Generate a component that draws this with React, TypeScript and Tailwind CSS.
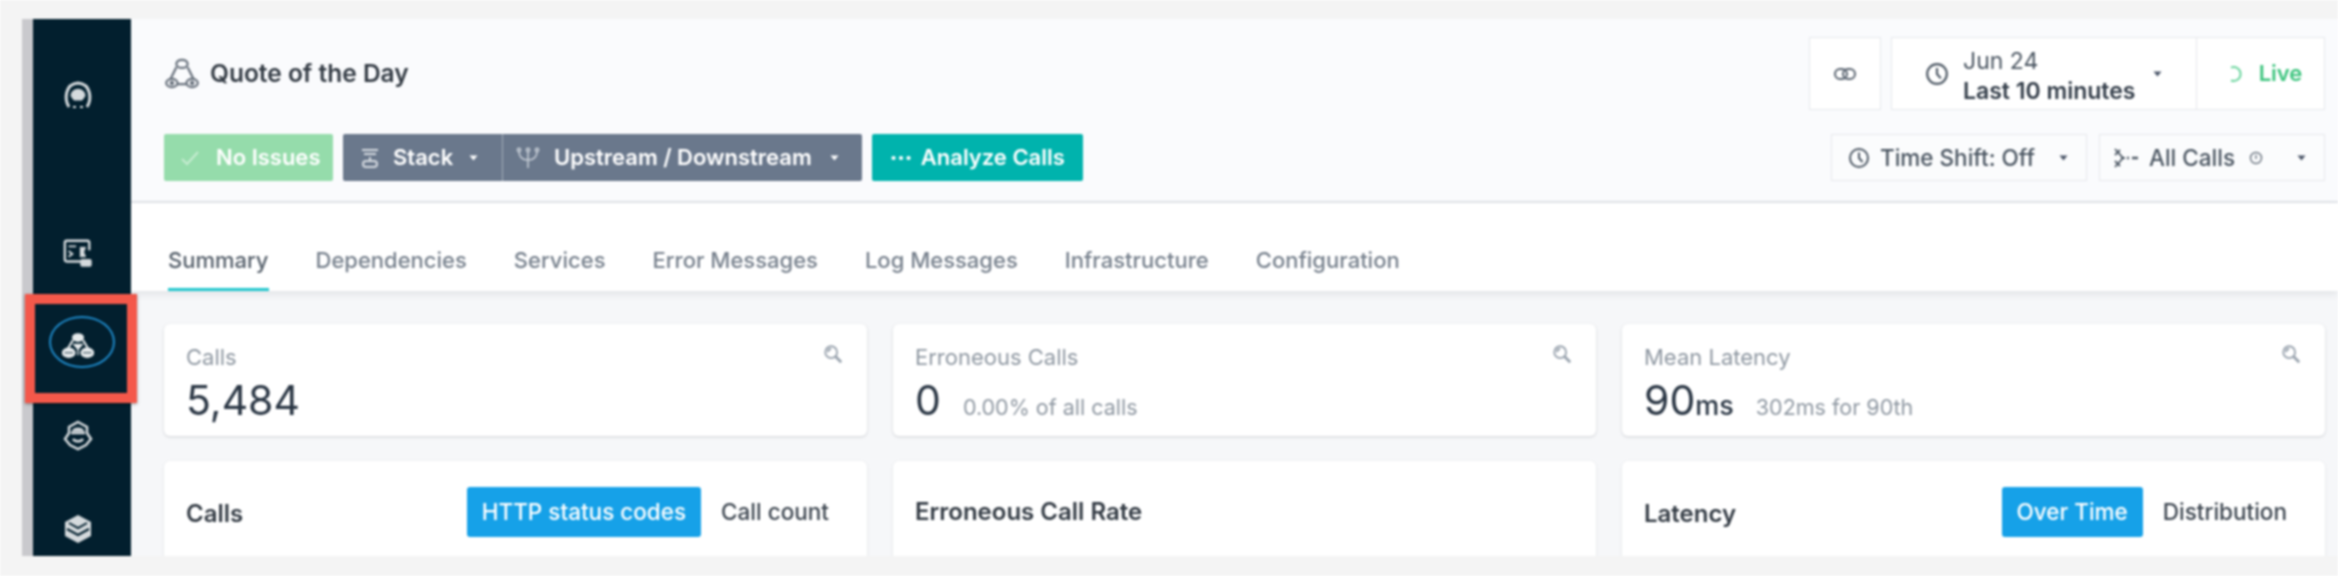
import React from 'react';

const Caret = ({ className = 'text-[#4a5568]' }: { className?: string }) => (
  <svg width="9" height="6" viewBox="0 0 9 6" className={className}>
    <path d="M0.5 0.5h8L4.5 5.5z" fill="currentColor" />
  </svg>
);

// three services joined in a triangle, used in the page title
const ClusterIcon = ({ size = 32, className = '' }: { size?: number; className?: string }) => (
  <svg width={size} height={size} viewBox="0 0 32 32" fill="none" stroke="currentColor" strokeWidth="2" className={className}>
    <ellipse cx="16" cy="7" rx="5" ry="3.6" />
    <ellipse cx="7" cy="24" rx="5" ry="3.6" />
    <ellipse cx="25" cy="24" rx="5" ry="3.6" />
    <path d="M11 10 6 20M21 10l5 10M12 25h8" />
    <circle cx="7" cy="24" r="1" fill="currentColor" />
    <circle cx="25" cy="24" r="1" fill="currentColor" />
  </svg>
);

const ActiveClusterIcon = () => (
  <svg width="38" height="32" viewBox="0 0 38 32" fill="none" stroke="#e6eaec" strokeWidth="2.4">
    <path d="M13 9 7 19M25 9l6 10" />
    <ellipse cx="19" cy="6" rx="6" ry="4" fill="#e6eaec" />
    <ellipse cx="8" cy="24" rx="7" ry="5" fill="#e6eaec" />
    <ellipse cx="30" cy="24" rx="7" ry="5" fill="#e6eaec" />
    <path d="M14 14h10l-5 6zM19 20v7" fill="#e6eaec" strokeWidth="1.6" />
    <path d="M3 24h10M25 24h10" stroke="#021f2e" strokeWidth="1" />
  </svg>
);

const ZoomIcon = () => (
  <svg width="20" height="20" viewBox="0 0 22 22" fill="none" stroke="#98a2ad" strokeWidth="2">
    <circle cx="9" cy="9" r="6.5" />
    <path d="M13.5 13.5 20 20" strokeWidth="3" />
    <path d="M5.5 9a3.5 3.5 0 0 1 3.5-3.5" />
  </svg>
);

const ClockIcon = ({ size = 22 }: { size?: number }) => (
  <svg width={size} height={size} viewBox="0 0 22 22" fill="none" stroke="#4f5a66" strokeWidth="2">
    <circle cx="11" cy="11" r="9" />
    <path d="M11 5.5V11l3.5 4" />
  </svg>
);

const SideIcon = ({ children, className }: { children: React.ReactNode; className: string }) => (
  <div className={`h-8 w-8 flex items-center justify-center text-[#d5dadd] ${className}`}>{children}</div>
);

const StatCard = ({ label, value, unit, note }: { label: string; value: string; unit?: string; note?: string }) => (
  <div className="relative h-[112px] bg-white rounded-md shadow-[0_1px_3px_rgba(40,50,60,0.18)] px-[22px] pt-[20px]">
    <div className="text-[22px] leading-[26px] text-[#8f98a2]">{label}</div>
    <div className="flex items-baseline mt-[5px] text-[#2a3644]">
      <span className="text-[41px] leading-[50px]">{value}</span>
      {unit && <span className="text-[27px] font-medium">{unit}</span>}
      {note && <span className="text-[21.5px] text-[#8f98a2] ml-[22px]">{note}</span>}
    </div>
    <div className="absolute right-[24px] top-[20px]"><ZoomIcon /></div>
  </div>
);

const ChartCard = ({ title, active, other }: { title: string; active?: string; other?: string }) => (
  <div className="h-[130px] bg-white rounded-md shadow-[0_1px_3px_rgba(40,50,60,0.12)] px-[22px] pt-[26px]">
    <div className="flex items-center justify-between h-[50px]">
      <span className={`text-[24px] font-semibold text-[#333b44] ${active ? 'mt-1' : ''}`}>{title}</span>
      {active && (
        <div className="flex items-center">
          <span className="h-[50px] px-[15px] flex items-center rounded-[3px] bg-[#16a1e8] text-white text-[22.5px] font-medium">{active}</span>
          <span className="pl-[20px] pr-[16px] text-[22.5px] font-medium text-[#3d4650]">{other}</span>
        </div>
      )}
    </div>
  </div>
);

const tabs = ['Summary', 'Dependencies', 'Services', 'Error Messages', 'Log Messages', 'Infrastructure', 'Configuration'];

export default function App() {
  return (
    <div className="h-[576px] w-[2338px] overflow-hidden bg-[#f4f4f4] pl-[22px] pt-[19px] blur-[1px] font-['Inter','Noto_Sans',sans-serif]">
      <div className="flex h-[537px]">
        <div className="w-[11px] bg-[#c9c9cd]"></div>

        {/* Sidebar */}
        <aside className="relative w-[98px] bg-[#021f2e] flex flex-col items-center pr-2 pt-[60px]">
          <SideIcon className="">
            <svg width="34" height="34" viewBox="0 0 32 32" fill="none" stroke="currentColor" strokeWidth="3">
              <path d="M7 28C2 20 3 5 16 4c13 1 14 16 9 24" />
              <path d="M9 17c0-9 14-9 14 0l-3 4h-8z" fill="currentColor" strokeWidth="1" />
              <path d="M11 28h3M18 28h3" strokeWidth="2" />
            </svg>
          </SideIcon>
          <SideIcon className="mt-[126px]">
            <svg width="36" height="36" viewBox="0 0 34 34" fill="none" stroke="currentColor" strokeWidth="2.5">
              <path d="M24 26H5a2 2 0 0 1-2-2V6a2 2 0 0 1 2-2h22a2 2 0 0 1 2 2v8" />
              <path d="M7 10h8M7 15l4 3-4 3" strokeWidth="2" />
              <path d="M19 11h6l-2 5 2 5h-6" fill="currentColor" strokeWidth="1" />
              <rect x="20" y="24" width="11" height="7" rx="1" fill="currentColor" strokeWidth="1" />
            </svg>
          </SideIcon>
          <SideIcon className="mt-[61px]"><ActiveClusterIcon /></SideIcon>
          <SideIcon className="mt-[57px]">
            <svg width="32" height="32" viewBox="0 0 32 32" fill="none" stroke="currentColor" strokeWidth="2.5">
              <path d="M16 3 25 8v6l4 6-5 6-8 4-8-4-5-6 4-6V8z" />
              <path d="M9 14h14M11 20c2 3 8 3 10 0" />
              <path d="M10 12c2-4 10-4 12 0z" fill="currentColor" strokeWidth="1" />
            </svg>
          </SideIcon>
          <SideIcon className="mt-[62px]">
            <svg width="32" height="32" viewBox="0 0 32 32" fill="currentColor">
              <path d="M16 2 29 9v14l-13 7-13-7V9z" />
              <path d="M7 10l9 5 9-5M5 16l11 6 11-6" fill="none" stroke="#021f2e" strokeWidth="2" />
            </svg>
          </SideIcon>

          {/* Annotation box */}
          <div className="absolute left-[-8px] top-[275px] w-[112px] h-[109px] border-[10px] border-[#f4584a] shadow-[0_1px_3px_rgba(0,0,0,0.4)]">
            <div className="absolute left-[14px] top-[12px] w-[66px] h-[52px] rounded-[50%] border-[2px] border-[#1e88c7]"></div>
          </div>
        </aside>

        {/* Main */}
        <main className="flex-1 min-w-0 flex flex-col overflow-hidden bg-[#f6f7f9]">
          <header className="relative h-[184px] shrink-0 bg-[#fafbfd] border-b-2 border-[#e3e6ea] pl-[33px] pr-[13px]">
            <div className="flex justify-between pt-[18px] h-[114px]">
              <div className="flex items-center gap-[10px] h-[73px] text-[#333b44]">
                <ClusterIcon size={36} className="text-[#69727d]" />
                <span className="text-[24.5px] font-semibold">Quote of the Day</span>
              </div>
              <div className="flex gap-[10px]">
                <button className="w-[72px] h-[73px] bg-white border border-[#e6e8ec] flex items-center justify-center">
                  <svg width="22" height="12" viewBox="0 0 22 12" fill="none" stroke="#5a6470" strokeWidth="2">
                    <rect x="1" y="1" width="12" height="10" rx="5" />
                    <rect x="9" y="1" width="12" height="10" rx="5" />
                  </svg>
                </button>
                <div className="flex h-[73px] bg-white border border-[#e6e8ec]">
                  <div className="w-[305px] flex items-center pl-[33px] pr-[34px] border-r border-[#e6e8ec]">
                    <ClockIcon size={24} />
                    <div className="ml-[14px] pt-[4px] text-[23px] leading-[30px] text-[#4a5561] whitespace-nowrap">
                      <div>Jun 24</div>
                      <div className="font-semibold text-[#333d49]">Last 10 minutes</div>
                    </div>
                    <div className="ml-auto"><Caret /></div>
                  </div>
                  <div className="w-[127px] flex items-center justify-center gap-[14px] pl-[10px] text-[22px] font-semibold text-[#3dc47e]">
                    <svg width="16" height="18" viewBox="0 0 16 18" fill="none" stroke="#6ed6a0" strokeWidth="2">
                      <path d="M2 2.5a7 7 0 1 1 0 13" />
                    </svg>
                    Live
                  </div>
                </div>
              </div>
            </div>

            <div className="flex justify-between mt-[1px]">
              <div className="flex h-[47px] gap-[10px] text-white text-[22px] font-semibold whitespace-nowrap">
                <div className="w-[169px] flex items-center pl-4 gap-[16px] rounded-[2px] bg-[#95dcab]">
                  <svg width="20" height="16" viewBox="0 0 20 16" fill="none" stroke="#c6ecd1" strokeWidth="2"><path d="m2 9 5 5L18 2" /></svg>
                  No Issues
                </div>
                <div className="flex rounded-[2px] bg-[#6a788c]">
                  <div className="w-[160px] flex items-center pl-4 gap-3 border-r border-[#a2adba]">
                    <svg width="22" height="22" viewBox="0 0 22 22" fill="none" stroke="#d5dae0" strokeWidth="2"><path d="M3 3h16M5 7h12M11 10v4" /><rect x="4" y="14" width="14" height="6" rx="3" /></svg>
                    Stack
                    <span className="ml-1"><Caret className="text-white" /></span>
                  </div>
                  <div className="w-[359px] flex items-center pl-[13px] gap-[14px]">
                    <svg width="24" height="24" viewBox="0 0 24 24" fill="none" stroke="#c5ccd5" strokeWidth="1.6"><path d="M12 6v16M3 5c0 7 4 9 9 9s9-2 9-9" /><circle cx="3" cy="4" r="1.6" /><circle cx="12" cy="4" r="1.6" /><circle cx="21" cy="4" r="1.6" /></svg>
                    Upstream / Downstream
                    <span className="ml-1"><Caret className="text-white" /></span>
                  </div>
                </div>
                <div className="w-[211px] flex items-center justify-center gap-[8px] rounded-[2px] bg-[#00b3ad]">
                  <span className="text-[13px] tracking-[1px] leading-none">•••</span>
                  Analyze Calls
                </div>
              </div>

              <div className="flex h-[47px] gap-3 text-[22.5px] text-[#4a5561] whitespace-nowrap">
                <div className="w-[256px] flex items-center pl-4 pr-[18px] gap-[10px] bg-[#fbfcfd] border border-[#e6e8ec]">
                  <ClockIcon />
                  <span className="font-medium">Time Shift: Off</span>
                  <span className="ml-auto"><Caret /></span>
                </div>
                <div className="w-[226px] flex items-center pl-[13px] pr-[18px] gap-[10px] bg-[#fbfcfd] border border-[#e6e8ec]">
                  <svg width="26" height="22" viewBox="0 0 26 22" fill="none" stroke="#4f5a66" strokeWidth="1.8"><path d="M2 2l8 9-8 9M2 8l5-5M2 14l5 5M8 11h4" /><path d="M14 11h2M19 11h6" strokeWidth="2.5" /></svg>
                  <span className="font-medium">All Calls</span>
                  <svg width="14" height="14" viewBox="0 0 14 14" fill="none" stroke="#6b7580" strokeWidth="1.4" className="ml-1"><circle cx="7" cy="7" r="5.5" /><path d="M7 4v4" /></svg>
                  <span className="ml-auto"><Caret /></span>
                </div>
              </div>
            </div>
          </header>

          <nav className="relative h-[88px] shrink-0 bg-white shadow-[0_3px_8px_rgba(40,50,60,0.1)] pl-[37px] flex items-end gap-[47px] text-[22px] font-medium text-[#77818d] whitespace-nowrap">
            {tabs.map((tab, i) => (
              <div key={tab} className={`h-[47px] ${i === 0 ? 'border-b-[3px] border-[#22c7ce] text-[#56606b]' : ''}`}>{tab}</div>
            ))}
          </nav>

          <div className="flex-1 min-h-0 overflow-hidden pl-[33px] pr-[13px] pt-[33px]">
            <div className="grid grid-cols-3 gap-x-[26px] gap-y-[25px]">
              <StatCard label="Calls" value="5,484" />
              <StatCard label="Erroneous Calls" value="0" note="0.00% of all calls" />
              <StatCard label="Mean Latency" value="90" unit="ms" note="302ms for 90th" />
              <ChartCard title="Calls" active="HTTP status codes" other="Call count" />
              <ChartCard title="Erroneous Call Rate" />
              <ChartCard title="Latency" active="Over Time" other="Distribution" />
            </div>
          </div>
        </main>
      </div>
    </div>
  );
}
